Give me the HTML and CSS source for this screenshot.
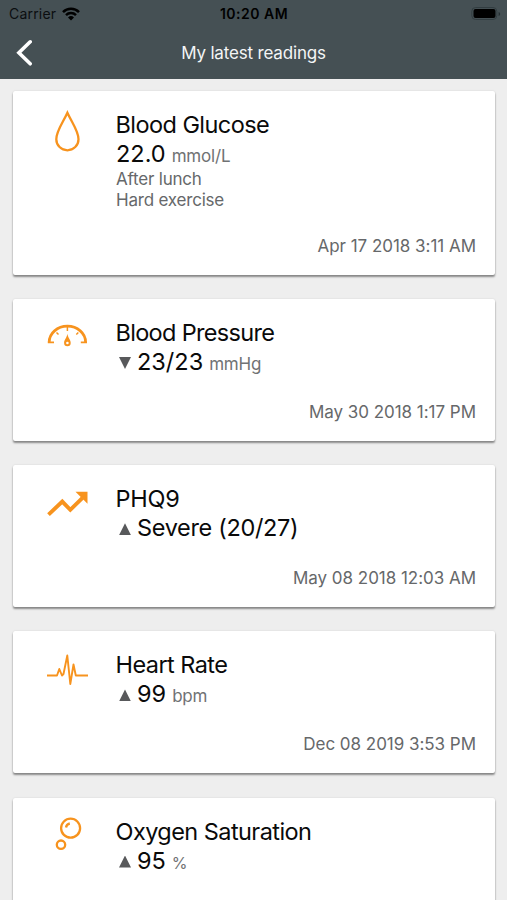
FILE: index.html
```html
<!DOCTYPE html>
<html lang="en">
<head>
<meta charset="utf-8">
<title>My latest readings</title>
<link rel="stylesheet" href="styles.css">
</head>
<body>
<header class="header">
  <div class="status">
    <div class="carrier"><span>Carrier</span>
      <svg class="wifi" viewBox="0 0 18 14" width="18" height="14"><path d="M1 5.200a11.200 11.200 0 0 1 16 0M4 8.100a7.200 7.200 0 0 1 10 0" fill="none" stroke="#000" stroke-width="2.500"/><path d="M6 10.400a4.300 4.300 0 0 1 6 0L9 13.400z"/></svg>
    </div>
    <div class="time">10:20 AM</div>
    <svg class="battery" viewBox="0 0 30 14" width="30" height="14"><rect x=".8" y=".5" width="25" height="12" rx="3.800" fill="none" stroke="#323d41"/><rect x="2.500" y="2" width="22" height="9" rx="2"/><path d="M27.600 5v4q1.600-.4 1.600-2t-1.600-2" fill="#263034"/></svg>
  </div>
  <div class="nav">
    <svg class="back" viewBox="0 0 18 28" width="18" height="28"><path d="M16.200 2.800 4.900 13.800 16.200 24.800" fill="none" stroke="#fff" stroke-width="3.600" stroke-linecap="round"/></svg>
    <h1>My latest readings</h1>
  </div>
</header>
<main class="list">
  <article class="card tall">
    <svg class="icon" viewBox="0 0 44 44" width="44" height="44"><path d="M22.400 4.800C18 14.500 11.300 23 11.300 31.200a11.100 11.100 0 0 0 22.200 0C33.500 23 26.800 14.500 22.400 4.800z" fill="none" stroke="#f7931e" stroke-width="2.300"/></svg>
    <div class="info">
      <h2>Blood Glucose</h2>
      <p class="reading"><b>22.0</b><small>mmol/L</small></p>
      <p class="note">After lunch</p>
      <p class="note">Hard exercise</p>
    </div>
    <time>Apr 17 2018 3:11 AM</time>
  </article>
  <article class="card">
    <svg class="icon" viewBox="0 0 44 44" width="44" height="44"><path d="M4.200 26.200a18.200 16 0 0 1 36.400 0" fill="none" stroke="#f7931e" stroke-width="2.700"/><path d="M2.800 26.400h6.200M35.800 26.400H42" stroke="#f7931e" stroke-width="1.800"/><path d="M22.400 11v4M11.500 16.500l2 2M33.300 16.500l-2 2" stroke="#f7931e" stroke-width="1.500"/><path d="M22.400 17.800c-.6 4.200-3.300 6-3.300 9.200a3.300 3.300 0 0 0 6.600 0c0-3.200-2.700-5-3.300-9.200z" fill="#f7931e"/><circle cx="22.400" cy="27" r="1.300" fill="#fff"/></svg>
    <div class="info">
      <h2 class="pressure">Blood Pressure</h2>
      <p class="reading"><i class="down"></i><b>23/23</b><small>mmHg</small></p>
    </div>
    <time>May 30 2018 1:17 PM</time>
  </article>
  <article class="card">
    <svg class="icon" viewBox="0 0 44 44" width="44" height="44"><g transform="translate(.5 4.800)"><path d="M3 27.800 16.800 14.800l8 8.200L37 11" fill="none" stroke="#f7931e" stroke-width="3.900"/><path d="M30 5h12v12z" fill="#f7931e"/></g></svg>
    <div class="info">
      <h2 class="phq">PHQ9</h2>
      <p class="reading"><i class="up"></i><b class="severity">Severe (20/27)</b></p>
    </div>
    <time>May 08 2018 12:03 AM</time>
  </article>
  <article class="card">
    <svg class="icon" viewBox="0 0 44 44" width="44" height="44"><path d="M2 27.500h10l2.300-6.500 2.700 6.500 1.500-1.500L22.300 7.500l3 28.500 3.200-19.500 2.300 11H43" fill="none" stroke="#f7931e" stroke-width="1.900" stroke-linejoin="round"/></svg>
    <div class="info">
      <h2>Heart Rate</h2>
      <p class="reading"><i class="up"></i><b>99</b><small>bpm</small></p>
    </div>
    <time>Dec 08 2019 3:53 PM</time>
  </article>
  <article class="card">
    <svg class="icon" viewBox="0 0 44 44" width="44" height="44"><g fill="none" stroke="#f7931e" stroke-width="2.300"><circle cx="25.600" cy="13.200" r="9.500"/><circle cx="16" cy="29.700" r="4.200"/><path d="M21 12.500q.4-3.300 3.800-4"/></g></svg>
    <div class="info">
      <h2>Oxygen Saturation</h2>
      <p class="reading"><i class="up"></i><b>95</b><small class="percent">%</small></p>
    </div>
  </article>
</main>
</body>
</html>
```
FILE: styles.css
```css
* { box-sizing: border-box; }
html, body { height: 100%; overflow: hidden; }
body { margin: 0; background: #eee; color: #0a0a0a; font-family: Inter, sans-serif; }
h1, h2, p { margin: 0; font-weight: 400; }
.header { height: 79px; background: #455054; }
.status { height: 27px; padding: 0 6px 0 9px; display: grid; grid-template-columns: 1fr auto 1fr; align-items: center; color: #000; }
.carrier { display: flex; align-items: center; gap: 6px; font-size: 14px; letter-spacing: .2px; }
.carrier span { color: #0b0e10; }
.time { padding-right: 2px; font-size: 14px; font-weight: 600; letter-spacing: .5px; }
.battery { justify-self: end; }
.nav { height: 52px; padding: 0 14px; display: grid; grid-template-columns: 18px 1fr 18px; align-items: center; }
.nav h1 { color: #f3f5f6; font-size: 17px; line-height: 24px; letter-spacing: -.17px; text-align: center; }
.list { padding: 12px 12px 0 13px; display: flex; flex-direction: column; gap: 24.500px; }
.card { height: 141.700px; flex: none; padding: 17px 19px 19px 32px; border-radius: 2px; background: #fff; box-shadow: 0 2px 2px rgba(0,0,0,.42), 0 0 2px rgba(0,0,0,.12); display: grid; grid-template: 1fr 20px / 71px 1fr; }
.card.tall { height: 183.500px; }
h2 { margin-left: -.5px; font-size: 23.500px; line-height: 33px; letter-spacing: -.56px; white-space: nowrap; }
.pressure { letter-spacing: -.68px; }
.phq { letter-spacing: -.2px; }
.reading { height: 27.500px; display: flex; align-items: baseline; line-height: 25px; white-space: nowrap; }
.reading b { font-size: 23.500px; font-weight: 400; }
.reading .severity { letter-spacing: -.33px; }
.reading small { margin-left: 6px; color: #707274; font-size: 17px; letter-spacing: -.2px; }
.reading small.percent { font-size: 16px; }
.reading i { width: 12px; height: 12px; margin: 0 6px 0 3px; background: #58595b; transform: translateY(-1px); }
.up { clip-path: polygon(50% 0, 100% 100%, 0 100%); }
.down { clip-path: polygon(0 0, 100% 0, 50% 100%); }
.note { color: #66686a; font-size: 17px; line-height: 21px; letter-spacing: -.2px; }
time { grid-column: 1 / -1; grid-row: 2; justify-self: end; color: #66686a; font-size: 17px; line-height: 20px; letter-spacing: -.03px; }
```
